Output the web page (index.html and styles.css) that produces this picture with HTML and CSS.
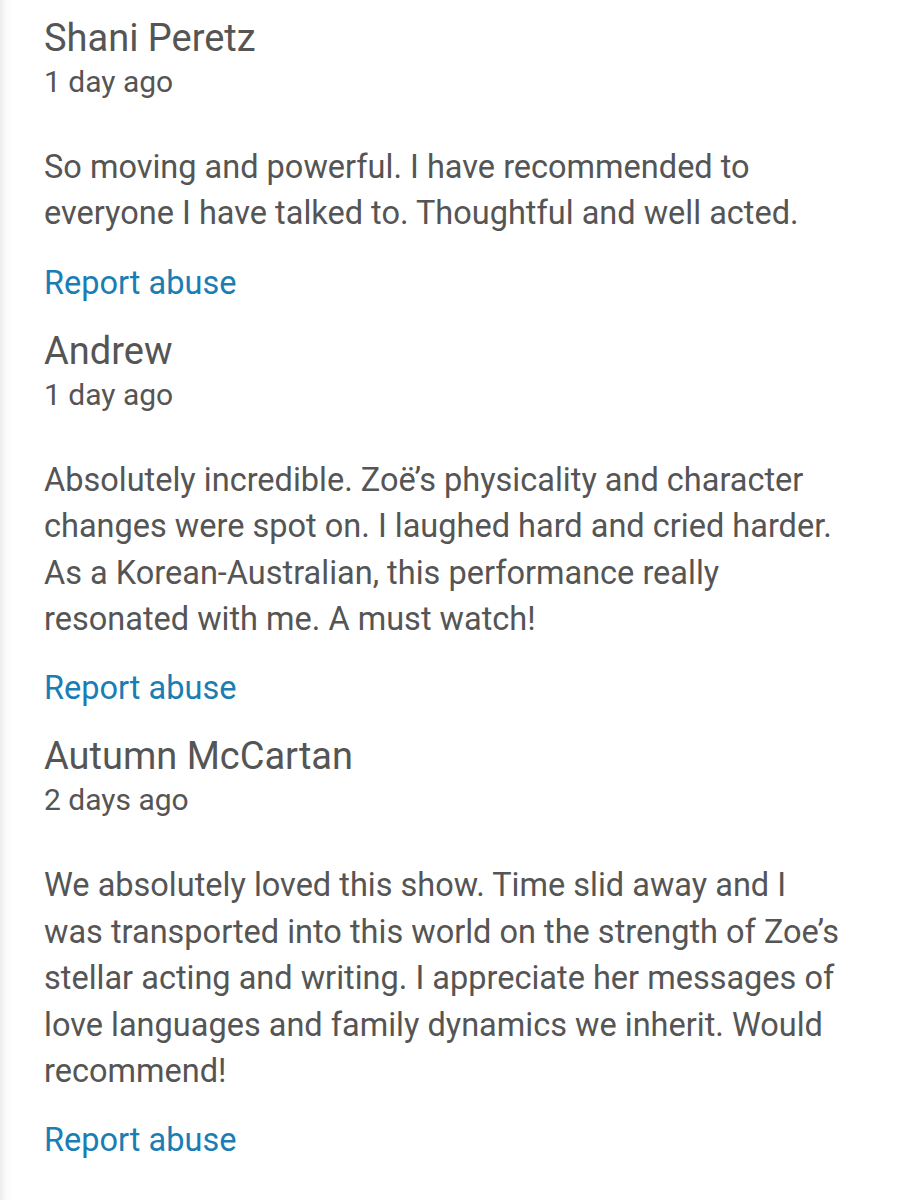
FILE: index.html
```html
<!DOCTYPE html>
<html>
<head>
<meta charset="utf-8">
<title>Reviews</title>
<link rel="stylesheet" href="styles.css">
</head>
<body>
<div class="reviews">
	<div class="review">
		<div class="review-name">Shani Peretz</div>
		<div class="review-date">1 day ago</div>
		<p class="review-text">So moving and powerful. I have recommended to everyone I have talked to. Thoughtful and well acted.</p>
		<a href="#" class="review-report">Report abuse</a>
	</div>
	<div class="review">
		<div class="review-name">Andrew</div>
		<div class="review-date">1 day ago</div>
		<p class="review-text">Absolutely incredible. Zoë’s physicality and character changes were spot on. I laughed hard and cried harder. As a Korean-Australian, this performance really resonated with me. A must watch!</p>
		<a href="#" class="review-report">Report abuse</a>
	</div>
	<div class="review">
		<div class="review-name">Autumn McCartan</div>
		<div class="review-date">2 days ago</div>
		<p class="review-text">We absolutely loved this show. Time slid away and I was transported into this world on the strength of Zoe’s stellar acting and writing. I appreciate her messages of love languages and family dynamics we inherit. Would recommend!</p>
		<a href="#" class="review-report">Report abuse</a>
	</div>
</div>
</body>
</html>
```

FILE: styles.css
```css
body, div, p, a { margin: 0; padding: 0; }
body { background: #fff; font-family: Roboto, "Liberation Sans", sans-serif; color: #555; }
a { text-decoration: none; }
.reviews { min-height: 1200px; padding: 13px 52px 0 44px; background: linear-gradient(to right, #ececec 0, #fafafa 6px, #fff 12px); }
.review { display: flex; flex-direction: column; align-items: flex-start; padding-bottom: 21px; }
.review-name { font-size: 38px; line-height: 50px; }
.review-date { font-size: 30px; line-height: 38px; }
.review-text { font-size: 32.5px; line-height: 46.4px; margin-top: 43px; }
.review-report { font-size: 32.5px; line-height: 44px; margin-top: 24px; color: #1a7db3; }
```
